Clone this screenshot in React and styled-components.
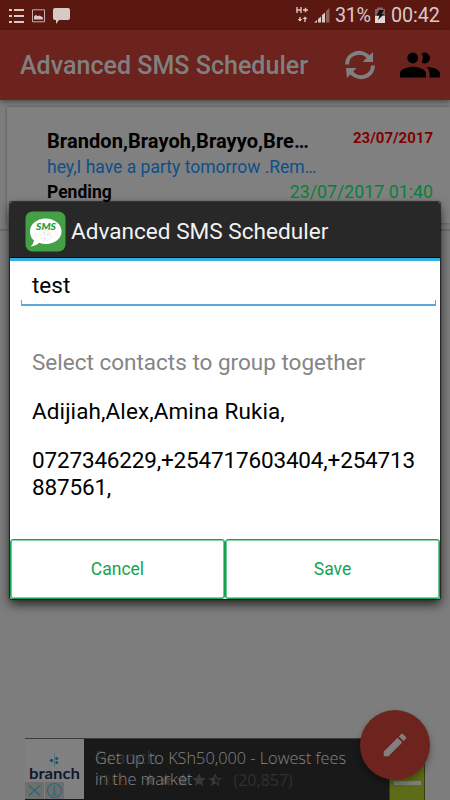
import React from "react";
import styled, { createGlobalStyle } from "styled-components";

const Global = createGlobalStyle`
  *{box-sizing:border-box}
  body{margin:0;background:#808080;font-family:Roboto,"Liberation Sans",sans-serif}
`;
const Screen = styled.div`
  position:relative;width:450px;height:800px;overflow:hidden;background:#7d7d7d;
  display:flex;flex-direction:column;
`;
const StatusBar = styled.div`
  height:30px;flex:none;background:#5a1810;display:flex;align-items:center;padding:1px 10px 0 8px;
  color:#d8c8c6;font-size:19.8px;line-height:30px;white-space:nowrap;
`;
const StatusText = styled.span`
  width:${p => p.$w}px;margin-left:${p => p.$ml}px;letter-spacing:${p => p.$ls || 0}px;
`;
const StatusIcon = styled.svg`flex:none;margin-left:${p => p.$ml || 0}px;`;
const Spacer = styled.div`flex:1;`;
const AppBar = styled.header`
  height:70px;flex:none;background:#6d231d;box-shadow:0 2px 5px rgba(0,0,0,.4);
  display:flex;align-items:center;padding:0 10px 0 20px;z-index:1;
`;
const AppTitle = styled.h1`
  margin:2px 0 0;flex:1;color:#808080;font-size:25px;font-weight:500;line-height:30px;white-space:nowrap;
  letter-spacing:.03px;
`;
const BarIcon = styled.svg`flex:none;margin-left:${p => p.$ml || 0}px;`;
const Card = styled.section`
  height:116px;flex:none;margin:7px 0 0 7px;padding:21px 17px 0 40px;background:#808080;
  box-shadow:0 0 3px rgba(0,0,0,.35);white-space:nowrap;
`;
const Row = styled.div`
  display:flex;justify-content:space-between;align-items:${p => p.$align || "center"};height:${p => p.$h}px;
`;
const Contact = styled.span`font-size:20px;line-height:26px;font-weight:700;color:#000;letter-spacing:.07px;`;
const Day = styled.span`font-size:15px;line-height:20px;font-weight:700;color:#800000;`;
const Message = styled.span`font-size:17.5px;line-height:26px;color:#0d4f88;`;
const State = styled.span`font-size:17.5px;line-height:24px;font-weight:700;color:#000;`;
const Time = styled.span`font-size:17.8px;line-height:24px;color:#08803a;`;
const Divider = styled.div`height:2px;flex:none;margin-top:6px;background:#6c6c6c;`;

const Ad = styled.aside`
  height:62px;flex:none;width:400px;margin-left:25px;background:#191919;border-top:1px solid #3a3a3a;
  display:flex;
`;
const AdLogo = styled.svg`flex:none;`;
const AdCopy = styled.div`
  position:relative;width:304px;padding:9px 0 0 10px;
`;
const AdText = styled.p`
  margin:0;position:relative;font-family:"Open Sans",sans-serif;font-weight:300;font-size:16.3px;line-height:21px;color:#858585;
  white-space:nowrap;
`;
const GhostBlock = styled.div`
  position:absolute;left:10px;top:8px;right:0;font-family:"Open Sans",sans-serif;color:#303030;white-space:nowrap;
`;
const GhostName = styled.div`font-size:19px;line-height:20px;height:22px;`;
const GhostRow = styled.div`display:flex;align-items:center;font-size:16px;height:22px;line-height:22px;`;
const Free = styled.span`width:47px;color:#3b2517;font-size:14px;`;
const Votes = styled.span`margin-left:10px;`;
const AdAction = styled.div`
  flex:1;background:#5d6c19;border-left:1px solid #34400d;border-right:1px solid #34400d;
  display:flex;justify-content:center;padding-top:42px;
`;
const ActionDash = styled.div`width:27px;height:4px;background:#808080;`;
const Fab = styled.button`
  position:absolute;left:360px;top:710px;width:70px;height:70px;border:0;border-radius:50%;padding:0;
  background:#6e241e;box-shadow:0 4px 7px rgba(0,0,0,.35);display:grid;place-items:center;
`;

const Dialog = styled.div`
  position:absolute;left:10px;top:202px;width:430px;height:397px;background:#fff;z-index:3;
  border-radius:2px;box-shadow:0 5px 11px rgba(0,0,0,.75),0 0 1px 1px rgba(0,0,0,.6);
  display:flex;flex-direction:column;color:#000;
`;
const DialogHead = styled.div`
  height:59px;flex:none;background:#282828;border-bottom:3px solid #32b0e0;border-radius:2px 2px 0 0;
  display:flex;align-items:center;padding:2px 0 0 15px;box-shadow:inset 0 -1px #170504;
`;
const DialogTitle = styled.h2`
  margin:2px 0 0 5px;color:#f2f2f2;font-size:22.6px;line-height:30px;font-weight:400;
`;
const Field = styled.div`
  margin:0 4px 0 11px;height:45px;flex:none;padding:8px 0 0 11px;font-size:22.5px;line-height:32px;
  display:flex;flex-direction:column;justify-content:space-between;
`;
const Underline = styled.div`
  height:6px;flex:none;margin:-7px 0 0 -11px;border:1px solid #5aa9d6;border-width:0 1px 2px;
`;
const Body = styled.div`
  padding:43px 0 0 22px;flex:1;font-size:22.5px;line-height:27px;white-space:nowrap;
`;
const Line = styled.p`
  margin:0 0 ${p => p.$mb || 0}px;color:${p => p.$c || "#000"};letter-spacing:${p => p.$ls || 0}px;
`;
const Buttons = styled.div`display:flex;height:60px;flex:none;`;
const DialogButton = styled.button`
  flex:1;height:60px;background:#fff;border:1px solid #12a551;border-radius:3px;padding:0;
  box-shadow:inset 0 0 0 .6px #12a551;
  color:#12a551;font:400 17.5px/24px Roboto,sans-serif;
`;

const Star = ({ half }) => (
  <svg width="16.3" height="16" viewBox="0 0 24 24">
    <path fill="#383838" d={half
      ? "M22 9.2 14.8 8.6 12 2 9.2 8.6 2 9.2l5.5 4.8L5.8 21 12 17.3 18.2 21l-1.6-7zM12 15.4V6.1l1.7 4 4.4.4-3.3 2.9 1 4.3z"
      : "M12 17.3 18.2 21l-1.6-7L22 9.2l-7.2-.6L12 2 9.2 8.6 2 9.2l5.5 4.8L5.8 21z"} />
  </svg>
);

export default function App() {
  return (
    <Screen>
      <Global />
      <StatusBar>
        <StatusIcon width="64" height="18" viewBox="0 0 64 18" fill="#d8c8c6">
          <path d="M1 2h3v2H1zM6 2h10v2H6zM1 8h3v2H1zM6 8h10v2H6zM1 14h3v2H1zM6 14h10v2H6z" />
          <path d="M24.5 2.8h12v12h-12z" fill="none" stroke="#c5b0ad" />
          <path d="M26 12.5V9.5l2-1.7 1.5 1.4 1.8-.8 3.5 1.8v2.3z" />
          <path d="M47 1h13q2 0 2 2v8q0 2-2 2h-9l-3 4v-4h-1q-2 0-2-2V3q0-2 2-2z" />
        </StatusIcon>
        <Spacer />
        <StatusIcon width="35" height="18" viewBox="0 0 35 18" fill="#d8c8c6">
          <path d="M1 0v6M5 0v6M1 3h4M7 3h5M9.5.7v4.6M4 10v4M9 11v4" fill="none" stroke="#d8c8c6" strokeWidth="1.4" />
          <path d="M1.6 12h4.8L4 14.5zM6.6 12h4.8L9 9.5z" />
          <path d="M18 15.5 21 13v2.5zM22 12l3-2.5v6h-3zM26 8l3-2.5v10h-3z" />
          <path d="M30 4l3.500-3v14.500H30z" fill="#8d605b" />
        </StatusIcon>
        <StatusText $w={37} $ml={4} $ls={-0.4}>31%</StatusText>
        <StatusIcon $ml={2} width="12" height="18" viewBox="0 0 12 18">
          <path d="M1 2h2V.500h6V2h2v8H1z" fill="#85635f" />
          <path d="M1 9h10v7H1z" fill="#e2d6d5" />
          <path d="M5 3h5L7.500 7H10l-6 6 1.500-4.500H2.500z" fill="#15100f" />
        </StatusIcon>
        <StatusText $w={49} $ml={5} $ls={-0.1}>00:42</StatusText>
      </StatusBar>
      <AppBar>
        <AppTitle>Advanced SMS Scheduler</AppTitle>
        <BarIcon width="32" height="30" viewBox="0 0 32 30">
          <path d="M3 14.500A12 11.500 0 0 1 25 8M29 15.500A12 11.500 0 0 1 7 22" fill="none" stroke="#808080" strokeWidth="4" />
          <path d="M29 2v10H18.500zM2 18h10.500L3 28z" fill="#808080" />
        </BarIcon>
        <BarIcon $ml={24} width="40" height="26" viewBox="0 0 40 26">
          <g fill="#000">
            <circle cx="12.700" cy="6" r="5.400" />
            <path d="M21.500 10.500a9 9 0 0 0 0-9A5.400 5.400 0 1 1 21.500 10.500z" />
            <path d="M0 25.500v-4.200C0 17 8 14.700 12.700 14.700S26 17 26 21.300v4.200zM26.500 15C33 15.300 40 17.500 40 21.300v4.200H29.500v-4.200c0-2.700-1.200-4.600-3-6.300z" />
          </g>
        </BarIcon>
      </AppBar>
      <Card>
        <Row $h={26} $align="flex-start"><Contact>Brandon,Brayoh,Brayyo,Bre…</Contact><Day>23/07/2017</Day></Row>
        <Row $h={25}><Message>hey,I have a party tomorrow .Rem…</Message></Row>
        <Row $h={25}><State>Pending</State><Time>23/07/2017 01:40</Time></Row>
      </Card>
      <Divider />
      <Spacer />
      <Ad>
        <AdLogo width="60" height="62" viewBox="0 0 60 62">
          <rect width="59" height="60" fill="#808080" />
          <path d="M29.500 14v14" stroke="#52717c" />
          <circle cx="26.500" cy="21.500" r="1.700" fill="#0d5573" /><circle cx="31.700" cy="19.500" r="1.500" fill="#0d5573" /><circle cx="31.700" cy="23.500" r="1.500" fill="#0d5573" />
          <text x="4" y="40" textLength="51" lengthAdjust="spacingAndGlyphs" fontFamily="Lato" fontWeight="700" fontSize="15" fill="#101831">branch</text>
          <path d="M0 43h39v17H0z" fill="#6e6e6e" />
          <path d="M19.500 43v17" stroke="#808080" />
          <path d="M4 46.500l11 10M15 46.500l-11 10" stroke="#286b75" strokeWidth="1.500" />
          <circle cx="29.500" cy="51.500" r="7" fill="none" stroke="#286b75" strokeWidth="1.200" />
          <path d="M29.500 47v2M28 50.500h1.500v5M27.500 55.500h4" stroke="#286b75" strokeWidth="1.500" fill="none" />
        </AdLogo>
        <AdCopy>
          <GhostBlock>
            <GhostName>Branch</GhostName>
            <GhostRow><Free>FREE</Free><Star /><Star /><Star /><Star /><Star half /><Votes>(20,857)</Votes></GhostRow>
          </GhostBlock>
          <AdText>Get up to KSh50,000 - Lowest fees</AdText>
          <AdText>in the market</AdText>
        </AdCopy>
        <AdAction><ActionDash /></AdAction>
      </Ad>
      <Fab aria-label="Edit">
        <svg width="30" height="30" viewBox="0 0 24 24" fill="#808080">
          <path d="M3 17.250V21h3.750L17.810 9.940l-3.750-3.750zM20.710 7.040a1 1 0 0 0 0-1.410l-2.340-2.340a1 1 0 0 0-1.410 0l-1.830 1.830 3.750 3.750z" />
        </svg>
      </Fab>
      <Dialog role="dialog">
        <DialogHead>
          <svg width="41" height="41" viewBox="0 0 41 41">
            <rect x=".500" y=".500" width="40" height="40" rx="7" fill="#43a047" />
            <path d="M20.700 7.500C29.500 7.500 36.500 13 36.500 20.500S29.500 33 20.700 33q-3.500 0-6.500-1.200Q11 35 5.500 35.500 8.500 33 9 29.500 5 26 5 20.500C5 13 12 7.500 20.700 7.500z" fill="#fff" />
            <text x="11" y="19" fontFamily="Lato" fontStyle="italic" fontWeight="900" fontSize="9.500" textLength="20" lengthAdjust="spacingAndGlyphs" fill="#269c31">SMS</text>
            <circle cx="21" cy="25" r="5" fill="none" stroke="#ddd" strokeDasharray="1.500 1.500" />
            <path d="M20 21l-1 3m4-2v3m-4 2 2 1" stroke="#c5c5c5" strokeWidth=".700" />
          </svg>
          <DialogTitle>Advanced SMS Scheduler</DialogTitle>
        </DialogHead>
        <Field><span>test</span><Underline /></Field>
        <Body>
          <Line $c="#858585" $mb={22}>Select contacts to group together</Line>
          <Line $mb={22} $ls={0.1}>Adijiah,Alex,Amina Rukia,</Line>
          <Line $ls={-0.17}>0727346229,+254717603404,+254713</Line>
          <Line $ls={-0.17}>887561,</Line>
        </Body>
        <Buttons><DialogButton>Cancel</DialogButton><DialogButton>Save</DialogButton></Buttons>
      </Dialog>
    </Screen>
  );
}
